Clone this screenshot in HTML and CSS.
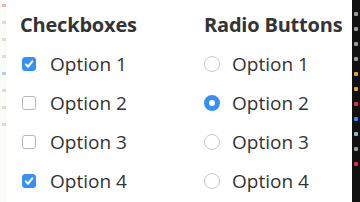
FILE: index.html
```html
<!DOCTYPE html>
<html>
<head>
<meta charset="utf-8">
<link rel="stylesheet" href="styles.css">
</head>
<body>
<div class="page">
  <div class="edge">
    <span class="mark m1"></span>
    <span class="mark"></span>
    <span class="mark"></span>
    <span class="mark"></span>
    <span class="mark m2"></span>
    <span class="mark"></span>
    <span class="mark"></span>
    <span class="mark"></span>
  </div>
  <div class="main">
    <section class="group checks">
      <h2 class="title">Checkboxes</h2>
      <div class="row"><span class="cb on"><svg viewBox="0 0 14 14" width="14" height="14"><path d="M3.8 7.4 L6.1 9.7 L10.3 4.4" fill="none" stroke="#fff" stroke-width="2" stroke-linecap="round" stroke-linejoin="round"/></svg></span><span class="label">Option 1</span></div>
      <div class="row"><span class="cb"></span><span class="label">Option 2</span></div>
      <div class="row"><span class="cb"></span><span class="label">Option 3</span></div>
      <div class="row"><span class="cb on"><svg viewBox="0 0 14 14" width="14" height="14"><path d="M3.8 7.4 L6.1 9.7 L10.3 4.4" fill="none" stroke="#fff" stroke-width="2" stroke-linecap="round" stroke-linejoin="round"/></svg></span><span class="label">Option 4</span></div>
    </section>
    <section class="group radios">
      <h2 class="title">Radio Buttons</h2>
      <div class="row"><span class="rb"></span><span class="label">Option 1</span></div>
      <div class="row"><span class="rb on"></span><span class="label">Option 2</span></div>
      <div class="row"><span class="rb"></span><span class="label">Option 3</span></div>
      <div class="row"><span class="rb"></span><span class="label">Option 4</span></div>
    </section>
  </div>
  <div class="dock">
    <span class="dot"></span>
    <span class="dot"></span>
    <span class="dot"></span>
    <span class="dot"></span>
    <span class="dot d5"></span>
    <span class="dot d5"></span>
    <span class="dot d6"></span>
    <span class="dot d7"></span>
    <span class="dot d8"></span>
    <span class="dot"></span>
    <span class="dot d6"></span>
  </div>
</div>
</body>
</html>
```
FILE: styles.css
```css
html, body {
  margin: 0;
  padding: 0;
  background: #fff;
}
.page {
  display: flex;
  width: 360px;
  height: 202px;
  overflow: hidden;
}
.edge {
  width: 7px;
  display: flex;
  flex-direction: column;
  align-items: center;
  gap: 14px;
  padding-top: 4px;
  background: #fbfbfa;
}
.mark {
  width: 4px;
  height: 3px;
  background: #dcdcd6;
}
.m1 { background: #e8b8b8; }
.m2 { background: #b8cce0; }
.main {
  flex: 1;
  display: flex;
  padding-left: 13px;
  font-family: "Open Sans", "Noto Sans", sans-serif;
  color: #333;
}
.group {
  display: flex;
  flex-direction: column;
}
.checks {
  width: 184px;
}
.title {
  margin: 13px 0 0 0;
  font-size: 20px;
  font-weight: bold;
  line-height: 24px;
  color: #343434;
  letter-spacing: -0.2px;
}
.row {
  display: flex;
  align-items: center;
  height: 39px;
}
.row:first-of-type {
  margin-top: 7px;
}
.label {
  font-size: 19px;
  color: #333;
}
.cb {
  width: 14px;
  height: 14px;
  box-sizing: border-box;
  border: 1px solid #b8b8b8;
  border-radius: 3px;
  margin: 1px 14px 0 2px;
  display: flex;
  align-items: center;
  justify-content: center;
  background: #fff;
}
.cb.on {
  background: #3a8ff5;
  border-color: #3a8ff5;
}
.cb svg {
  display: block;
  flex: none;
}
.rb {
  width: 16px;
  height: 16px;
  border: 1px solid #c8c8c8;
  border-radius: 50%;
  margin: 1px 12px 0 0;
  box-sizing: border-box;
  background: #fff;
}
.rb.on {
  border: 5.5px solid #3a8ff5;
}
.dock {
  width: 8px;
  background: #111;
  display: flex;
  flex-direction: column;
  align-items: center;
  gap: 11px;
  padding-top: 12px;
}
.dot {
  width: 4px;
  height: 4px;
  background: #999;
  border-radius: 1px;
}
.d5 { background: #e8a030; }
.d6 { background: #d03838; }
.d7 { background: #3a8ae0; }
.d8 { background: #8ab8d0; }
```
